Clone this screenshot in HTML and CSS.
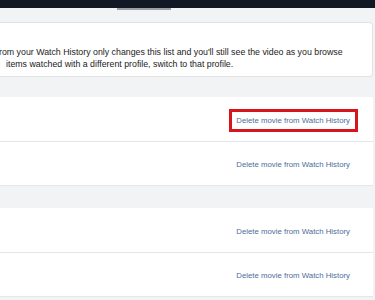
FILE: index.html
```
<!DOCTYPE html>
<html>
<head>
<meta charset="utf-8">
<link rel="stylesheet" href="styles.css">
</head>
<body>
<header class="topbar"></header>
<nav class="tabs"><span class="tab-indicator"></span></nav>
<main class="page">
  <section class="notice">
    <p class="notice-text"><span class="line l1">rom your Watch History only changes this list and you'll still see the video as you browse</span><span class="line l2">items watched with a different profile, switch to that profile.</span></p>
  </section>
  <section class="group">
    <div class="row"><a class="del highlighted">Delete movie from Watch History</a></div>
    <div class="row"><a class="del">Delete movie from Watch History</a></div>
  </section>
  <section class="group">
    <div class="row"><a class="del">Delete movie from Watch History</a></div>
    <div class="row"><a class="del">Delete movie from Watch History</a></div>
  </section>
</main>
</body>
</html>
```
FILE: styles.css
```
* { box-sizing: border-box; }
html, body { margin: 0; padding: 0; }
body {
  background: #f2f3f4;
  font-family: "Liberation Sans", Arial, sans-serif;
  color: #1a1a1a;
  width: 375px;
  height: 300px;
  overflow: hidden;
}
.topbar {
  height: 8px;
  background: #111a24;
}
.tabs {
  height: 14px;
  display: flex;
}
.tab-indicator {
  display: block;
  margin-left: 117px;
  width: 54px;
  height: 2px;
  background: #9aa0a6;
}
.page {
  margin-right: 2px;
}
.notice {
  background: #fff;
  border: 1px solid #e1e3e4;
  border-left: none;
  border-radius: 0 4px 4px 0;
  height: 55px;
  padding-top: 23px;
}
.notice-text {
  margin: 0;
  font-size: 8.8px;
  line-height: 12px;
  color: #222;
  white-space: nowrap;
}
.line { display: block; }
.l1 { margin-left: -1px; }
.l2 { padding-left: 6px; }
.group {
  margin-top: 20px;
  background: #fff;
}
.group + .group { margin-top: 22px; }
.row {
  height: 45px;
  border-bottom: 1px solid #e4e6e7;
  display: flex;
  align-items: center;
  justify-content: flex-end;
  padding-right: 23px;
  padding-top: 2px;
}
.group .row:last-child { height: 44px; }
.del {
  position: relative;
  font-size: 7.8px;
  color: #4d6d9a;
  text-decoration: none;
  white-space: nowrap;
}
.highlighted::after {
  content: "";
  position: absolute;
  left: -7px;
  right: -8px;
  top: -7px;
  bottom: -7px;
  border: 3px solid #d8141c;
}
```
